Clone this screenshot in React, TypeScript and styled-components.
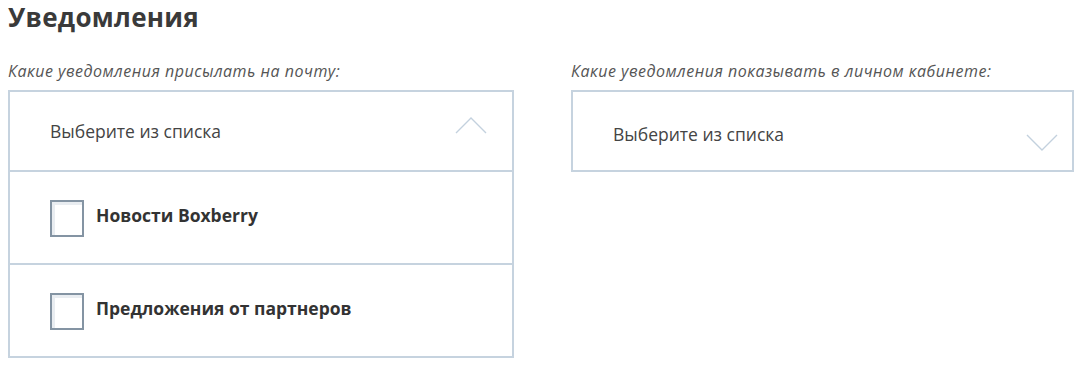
import React from 'react';
import styled, { createGlobalStyle } from 'styled-components';

const GlobalStyle = createGlobalStyle`
    body {
        margin: 0;
        background: #ffffff;
        font-family: 'Open Sans', 'Liberation Sans', sans-serif;
        color: #333;
    }
`;

const Page = styled.div`
    padding: 0 9px 0 8px;
`;

const Title = styled.h2`
    margin: 0;
    padding-top: 1px;
    font-size: 26px;
    line-height: 32px;
    font-weight: 700;
    letter-spacing: 0.3px;
    color: #3a3a3a;
`;

const Columns = styled.div`
    display: grid;
    grid-template-columns: 506px 503px;
    column-gap: 57px;
    align-items: start;
    margin-top: 27px;
`;

const Column = styled.div`
    display: flex;
    flex-direction: column;
`;

const Label = styled.div`
    font-size: 16px;
    line-height: 22px;
    font-style: italic;
    letter-spacing: 0.5px;
    color: #555;
    margin-bottom: 8px;
`;

const Box = styled.div`
    border: 2px solid #c6d3df;
    background: #fff;
`;

const Header = styled.div<{ $open?: boolean }>`
    height: 78px;
    display: flex;
    align-items: center;
    justify-content: space-between;
    padding: ${({ $open }) => ($open ? '0 25px 0 40px' : '5px 14px 0 40px')};
    box-sizing: border-box;
    font-size: 17.5px;
    color: #444;

    svg {
        margin-top: ${({ $open }) => ($open ? '-12px' : '18px')};
    }
`;

const Row = styled.label`
    height: 91px;
    border-top: 2px solid #c6d3df;
    display: flex;
    align-items: center;
    padding-left: 40px;
    gap: 12px;
    font-size: 17.5px;
    font-weight: 700;
    color: #333;
`;

const RowText = styled.span`
    margin-top: -6px;
`;

const Check = styled.span`
    width: 30px;
    height: 33px;
    border: 2px solid #8494a3;
    box-shadow: inset 3px 3px 0 #e9edf1;
    background: #fff;
    margin-top: 2px;
`;

const Chevron = ({ up }: { up?: boolean }) => (
    <svg width="32" height="18" viewBox="0 0 32 18">
        <polyline
            points={up ? '1,17 16,2 31,17' : '1,1 16,16 31,1'}
            fill="none"
            stroke="#c3d1de"
            strokeWidth="1.4"
        />
    </svg>
);

const App: React.FC = () => {
    return (
        <Page>
            <GlobalStyle />
            <Title>Уведомления</Title>
            <Columns>
                <Column>
                    <Label>Какие уведомления присылать на почту:</Label>
                    <Box>
                        <Header $open>
                            Выберите из списка
                            <Chevron up />
                        </Header>
                        <Row>
                            <Check />
                            <RowText>Новости Boxberry</RowText>
                        </Row>
                        <Row>
                            <Check />
                            <RowText>Предложения от партнеров</RowText>
                        </Row>
                    </Box>
                </Column>
                <Column>
                    <Label>Какие уведомления показывать в личном кабинете:</Label>
                    <Box>
                        <Header>
                            Выберите из списка
                            <Chevron />
                        </Header>
                    </Box>
                </Column>
            </Columns>
        </Page>
    );
};

export default App;
